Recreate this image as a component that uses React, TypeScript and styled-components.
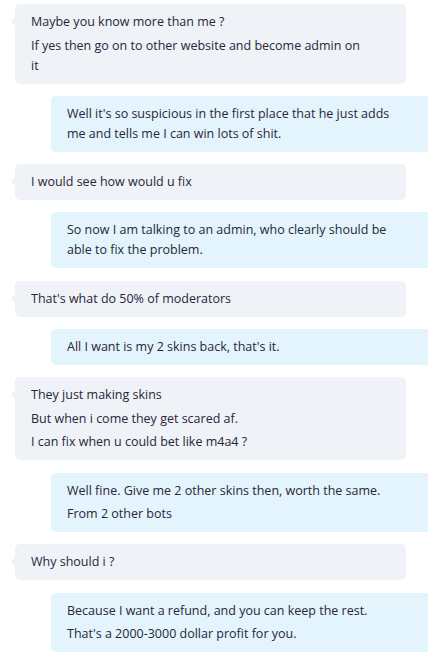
import React from "react";
import styled, { createGlobalStyle } from "styled-components";

const GlobalStyle = createGlobalStyle`
  html, body {
    margin: 0;
    padding: 0;
    background: #ffffff;
  }
  body {
    font-family: "Segoe UI", "Open Sans", "Noto Sans", sans-serif;
    overflow: hidden;
  }
`;

type Message = {
  mine: boolean;
  lines: string[];
};

const messages: Message[] = [
  {
    mine: false,
    lines: [
      "Maybe you know more than me ?",
      "If yes then go on to other website and become admin on\nit"
    ]
  },
  {
    mine: true,
    lines: [
      "Well it's so suspicious in the first place that he just adds\nme and tells me I can win lots of shit."
    ]
  },
  { mine: false, lines: ["I would see how would u fix"] },
  {
    mine: true,
    lines: [
      "So now I am talking to an admin, who clearly should be\nable to fix the problem."
    ]
  },
  { mine: false, lines: ["That's what do 50% of moderators"] },
  { mine: true, lines: ["All I want is my 2 skins back, that's it."] },
  {
    mine: false,
    lines: [
      "They just making skins",
      "But when i come they get scared af.",
      "I can fix when u could bet like m4a4 ?"
    ]
  },
  {
    mine: true,
    lines: [
      "Well fine. Give me 2 other skins then, worth the same.",
      "From 2 other bots"
    ]
  },
  { mine: false, lines: ["Why should i ?"] },
  {
    mine: true,
    lines: [
      "Because I want a refund, and you can keep the rest.",
      "That's a 2000-3000 dollar profit for you."
    ]
  }
];

const Thread = styled.div`
  display: flex;
  flex-direction: column;
  gap: 12.3px;
  padding-top: 4px;
  width: 428px;
  overflow: hidden;
`;

const Bubble = styled.div<{ mine: boolean }>`
  position: relative;
  box-sizing: border-box;
  margin-left: ${p => (p.mine ? "51px" : "15px")};
  margin-right: ${p => (p.mine ? "0" : "22px")};
  padding: 8px 16px;
  background: ${p => (p.mine ? "#e3f4fc" : "#eff2f7")};
  border-radius: ${p => (p.mine ? "5px 0 0 5px" : "5px")};

  &::before {
    content: "";
    display: ${p => (p.mine ? "none" : "block")};
    position: absolute;
    left: -3px;
    top: 14px;
    width: 7px;
    height: 7px;
    background: #eff2f7;
    border-radius: 1px 0 1px 2px;
    transform: rotate(45deg);
  }
`;

const Line = styled.p`
  margin: 0;
  font-size: 12.5px;
  line-height: 20px;
  color: #28263a;
  white-space: pre-line;

  & + & {
    margin-top: 3.5px;
  }
`;

export default function App() {
  return (
    <>
      <GlobalStyle />
      <Thread>
        {messages.map((m, i) => (
          <Bubble key={i} mine={m.mine}>
            {m.lines.map((l, j) => (
              <Line key={j}>{l}</Line>
            ))}
          </Bubble>
        ))}
      </Thread>
    </>
  );
}
